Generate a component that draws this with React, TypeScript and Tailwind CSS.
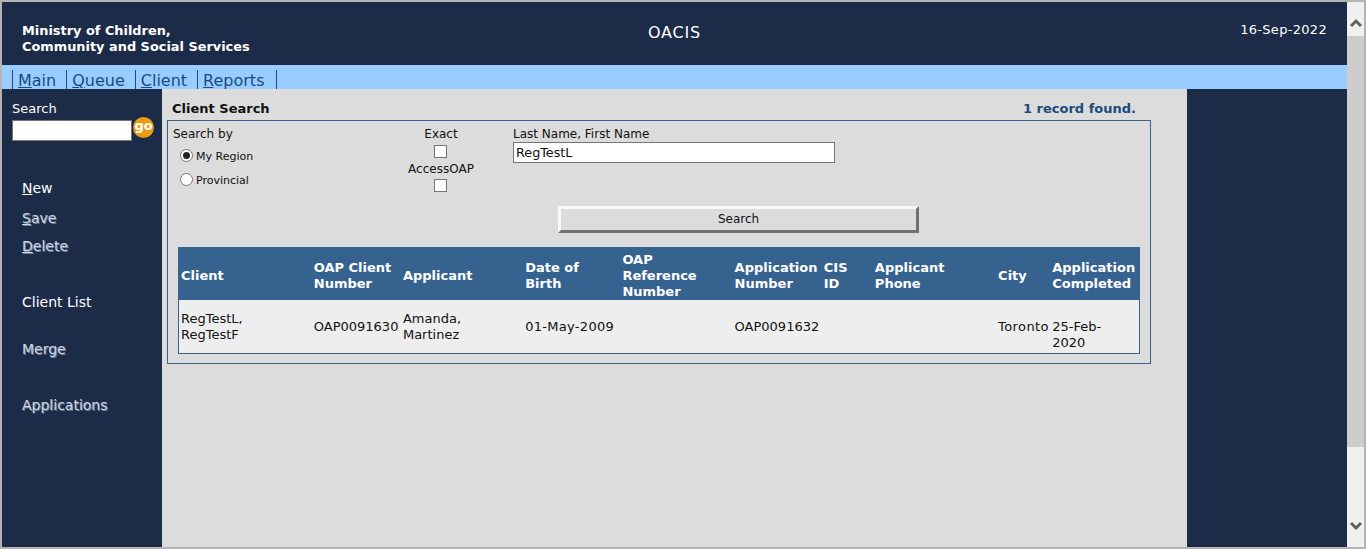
import React from 'react';

const columns = [
  { label: 'Client', value: ['RegTestL,', 'RegTestF'], width: 'w-[133px]', cell: '' },
  { label: 'OAP Client Number', value: ['OAP0091630'], width: 'w-[89px]', cell: '' },
  { label: 'Applicant', value: ['Amanda,', 'Martinez'], width: 'w-[122px]', cell: '' },
  { label: 'Date of Birth', value: ['01-May-2009'], width: 'w-[97px]', cell: 'tracking-[0.3px]' },
  { label: 'OAP Reference Number', value: [], width: 'w-[112px]', cell: '' },
  { label: 'Application Number', value: ['OAP0091632'], width: 'w-[89px]', cell: '' },
  { label: 'CIS ID', value: [], width: 'w-[51px]', cell: '' },
  { label: 'Applicant Phone', value: [], width: 'w-[123px]', cell: '' },
  { label: 'City', value: ['Toronto'], width: 'w-[54px]', cell: 'tracking-[0.4px]' },
  { label: 'Application Completed', value: ['25-Feb-', '2020'], width: 'w-[89px]', cell: 'pt-[18px]' },
];

const Header: React.FC = () => (
  <div className="flex h-[63px] bg-[#1c2b47] text-white">
    <div className="w-[480px] pt-[21px] pl-5 text-[12.9px] leading-4 font-bold">
      <div>Ministry of Children,</div>
      <div>Community and Social Services</div>
    </div>
    <div className="flex-1 pt-[21px] pl-[166px] text-base leading-5 tracking-[0.8px]">OACIS</div>
    <div className="pt-[20px] pr-5 text-[13px] leading-4 tracking-[0.3px]">16-Sep-2022</div>
  </div>
);

const Nav: React.FC = () => (
  <div className="flex h-6 bg-[#99ccff] pt-[5px] pl-[10px] text-base leading-[21px] text-[#1b4b80]">
    {['Main', 'Queue', 'Client', 'Reports'].map((item) => (
      <div key={item} className="h-[19px] border-l border-[#1b4b80] pr-[10px] pl-[5px] last:border-r last:pr-[12px]">
        <u>{item[0]}</u>
        {item.slice(1)}
      </div>
    ))}
  </div>
);

const Sidebar: React.FC = () => (
  <div className="flex w-[160px] flex-col bg-[#1c2b47] text-sm text-white">
    <div className="pt-[12px] pl-[10px] text-[13px] leading-4">Search</div>
    <div className="flex items-start pl-[10px]">
      <div className="mt-[3px] h-[21px] w-[120px] border border-[#767676] bg-white" />
      <div className="ml-[1px] h-[21px] w-[21px] rounded-full bg-[#e89c14] text-center text-[13px] leading-[17px] font-bold">
        go
      </div>
    </div>
    <div className="mt-[39px] pl-5 leading-4">
      <div className="h-[30px]">
        <u>N</u>ew
      </div>
      <div className="h-[28px] text-[#d0d6e0] [text-shadow:1px_1px_0_#6c7f9c]">
        <u>S</u>ave
      </div>
      <div className="h-[56px] text-[#d0d6e0] [text-shadow:1px_1px_0_#6c7f9c]">
        <u>D</u>elete
      </div>
      <div className="h-[47px]">Client List</div>
      <div className="h-[56px] text-[#d0d6e0] [text-shadow:1px_1px_0_#6c7f9c]">Merge</div>
      <div className="text-[#d0d6e0] [text-shadow:1px_1px_0_#6c7f9c]">Applications</div>
    </div>
  </div>
);

const RadioOption: React.FC<{ label: string; checked?: boolean; className: string }> = ({ label, checked, className }) => (
  <div className={`flex items-start gap-[3px] pl-[7px] text-[11px] leading-[14px] ${className}`}>
    <span className="mt-[1px] flex h-[13px] w-[13px] items-center justify-center rounded-full border border-[#767676] bg-white">
      {checked && <span className="h-[7px] w-[7px] rounded-full bg-[#222]" />}
    </span>
    <span className="mt-[2px]">{label}</span>
  </div>
);

const SearchForm: React.FC = () => (
  <div className="flex h-[79px] shrink-0">
    <div className="w-[219px] pt-[6px] pl-[5px] text-xs leading-[15px]">
      <div>Search by</div>
      <RadioOption label="My Region" checked className="mt-[6px]" />
      <RadioOption label="Provincial" className="mt-[8px]" />
    </div>
    <div className="flex w-[108px] flex-col items-center pt-[6px] text-xs leading-[15px]">
      <div>Exact</div>
      <div className="mt-[3px] mr-[2px] h-[13px] w-[13px] border border-[#767676] bg-white" />
      <div className="mt-[4px]">AccessOAP</div>
      <div className="mt-[2px] mr-[2px] h-[13px] w-[13px] border border-[#767676] bg-white" />
    </div>
    <div className="pt-[6px] pl-[18px] text-xs leading-[15px]">
      <div>Last Name, First Name</div>
      <div className="flex h-[21px] w-[322px] items-center border border-[#767676] bg-white pl-[2px] text-[12.75px]">
        RegTestL
      </div>
    </div>
  </div>
);

const ResultsTable: React.FC = () => (
  <table className="ml-[10px] w-[962px] table-fixed border-collapse border border-[#366290] bg-[#eeeeee] text-[13px] leading-4">
    <colgroup>
      {columns.map((c) => (
        <col key={c.label} className={c.width} />
      ))}
    </colgroup>
    <thead>
      <tr className="h-[52px] bg-[#366290] text-white">
        {columns.map((c) => (
          <th key={c.label} className="pt-[4px] pr-[3px] pl-[2px] text-left align-middle font-bold">
            {c.label === 'CIS ID' ? (
              <>
                CIS
                <br />
                ID
              </>
            ) : (
              c.label
            )}
          </th>
        ))}
      </tr>
    </thead>
    <tbody>
      <tr className="h-[53px] text-[#111]">
        {columns.map((c) => (
          <td key={c.label} className={`pt-[2px] pr-[3px] pl-[2px] align-middle ${c.cell}`}>
            {c.value.map((line) => (
              <div key={line}>{line}</div>
            ))}
          </td>
        ))}
      </tr>
    </tbody>
  </table>
);

const Scrollbar: React.FC = () => (
  <div className="flex w-[17px] flex-col bg-[#f0f0f0]">
    <div className="flex h-[34px] justify-center pt-[16px]">
      <svg width="12" height="10" viewBox="0 0 12 10">
        <path d="M1 8 L6 3 L11 8" fill="none" stroke="#606060" strokeWidth="3" />
      </svg>
    </div>
    <div className="h-[411px] bg-[#cdcdcd]" />
    <div className="flex-1" />
    <div className="flex h-[26px] justify-center">
      <svg width="12" height="10" viewBox="0 0 12 10">
        <path d="M1 2 L6 7 L11 2" fill="none" stroke="#606060" strokeWidth="3" />
      </svg>
    </div>
  </div>
);

export default function App() {
  return (
    <div className="flex h-[549px] w-[1366px] overflow-hidden border-2 border-[#b4b4b4] bg-[#dcdcdc] font-['DejaVu_Sans',sans-serif]">
      <div className="flex min-w-0 flex-1 flex-col">
        <Header />
        <Nav />
        <div className="flex flex-1">
          <Sidebar />
          <div className="flex w-[1025px] flex-col px-[5px] pt-[12px] text-[#111]">
            <div className="flex h-[19px] w-[969px] justify-between pl-[5px] text-[13px] leading-4 font-bold">
              <span>Client Search</span>
              <span className="text-[#1c4a7a]">1 record found.</span>
            </div>
            <div className="flex h-[244px] w-[984px] flex-col border border-[#366290]">
              <SearchForm />
              <button className="mt-[6px] ml-[390px] h-[27px] w-[361px] shrink-0 border-[3px] border-t-[#f8f8f8] border-r-[#707070] border-b-[#707070] border-l-[#f8f8f8] bg-[#dcdcdc] pb-[2px] text-xs">
                Search
              </button>
              <div className="mt-[14px]">
                <ResultsTable />
              </div>
            </div>
          </div>
          <div className="flex-1 bg-[#1c2b47]" />
        </div>
      </div>
      <Scrollbar />
    </div>
  );
}
